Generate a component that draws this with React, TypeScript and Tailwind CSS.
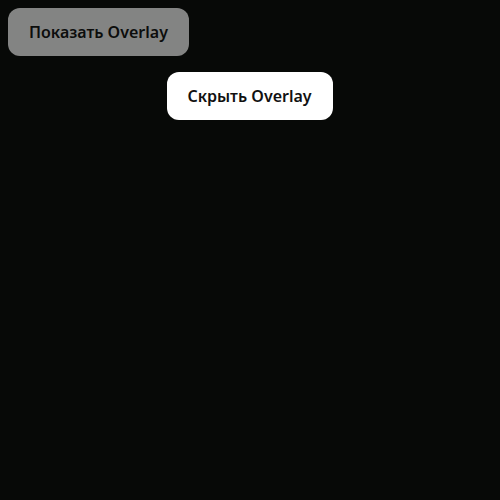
export default function App() {
  return (
    <div className="relative h-[500px] w-[500px] overflow-hidden bg-[#070907] font-['Noto_Sans',sans-serif]">
      <div className="p-2">
        <button className="h-[48px] w-[181px] rounded-xl bg-white text-[16px] font-semibold text-[#111] opacity-50">
          Показать Overlay
        </button>
      </div>
      <div className="mt-2 flex justify-center">
        <button className="ml-[-1px] h-[48px] w-[166px] rounded-xl bg-white text-[16px] font-semibold text-[#111]">
          Скрыть Overlay
        </button>
      </div>
    </div>
  );
}
